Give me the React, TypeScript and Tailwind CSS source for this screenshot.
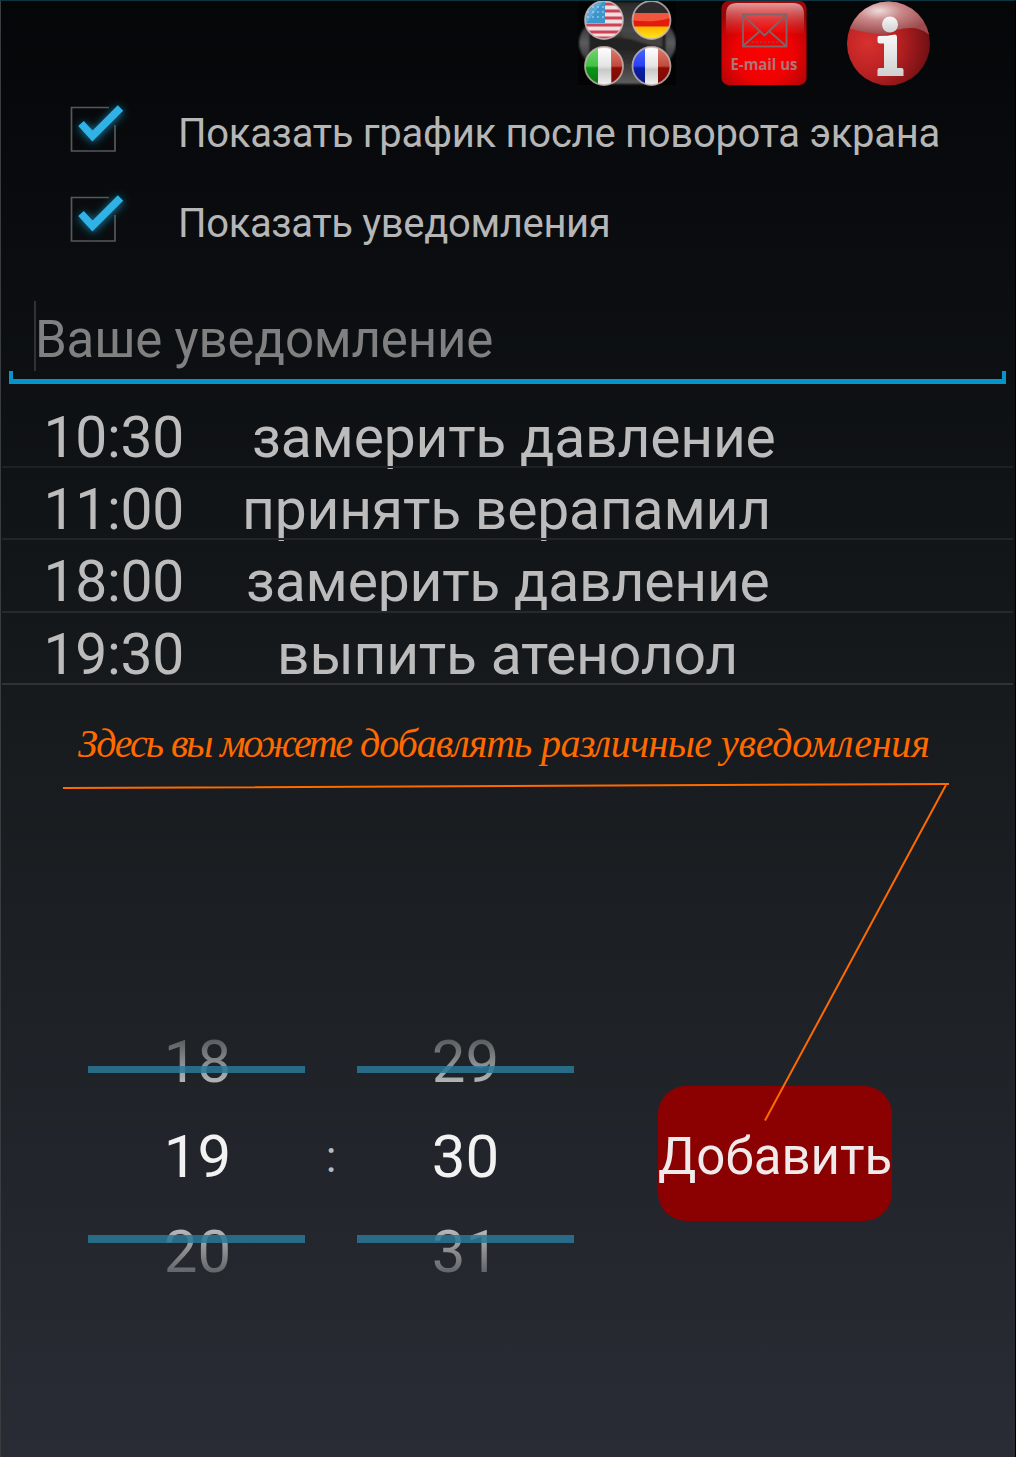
import React from "react";

const notifications = [
  { time: "10:30", text: "замерить давление", pad: "pl-[68px]", line: "bg-[#1e2022]" },
  { time: "11:00", text: "принять верапамил", pad: "pl-[58px]", line: "bg-[#232629]" },
  { time: "18:00", text: "замерить давление", pad: "pl-[62px]", line: "bg-[#272a2d]" },
  { time: "19:30", text: "выпить атенолол", pad: "pl-[93px]", line: "bg-[#303336]" },
];

const hintWords = [
  { text: "Здесь", style: "w-[93px] tracking-[-2.1px]" },
  { text: "вы", style: "w-[49px] tracking-[-2px]" },
  { text: "можете", style: "w-[140px] tracking-[-2.4px]" },
  { text: "добавлять", style: "w-[181px] tracking-[-1px]" },
  { text: "различные", style: "w-[180px] tracking-[-0.6px]" },
  { text: "уведомления", style: "w-[214px] tracking-[-0.2px]" },
];

function LanguagesIcon() {
  const flags = [
    { id: "us", cx: 26, cy: 20 },
    { id: "de", cx: 73.5, cy: 20 },
    { id: "it", cx: 26, cy: 66 },
    { id: "fr", cx: 73.5, cy: 66 },
  ];
  return (
    <svg width="98" height="86" viewBox="0 0 98 86" className="block">
      <defs>
        <linearGradient id="pad" x1="0" y1="0" x2="0" y2="1">
          <stop offset="0" stopColor="#2a2a2a" />
          <stop offset="0.35" stopColor="#484848" />
          <stop offset="0.5" stopColor="#252323" />
          <stop offset="0.7" stopColor="#303030" />
          <stop offset="1" stopColor="#606060" />
        </linearGradient>
        <linearGradient id="side" x1="0" y1="0" x2="0" y2="1">
          <stop offset="0" stopColor="#151515" />
          <stop offset="0.5" stopColor="#5c5c5e" />
          <stop offset="1" stopColor="#151515" />
        </linearGradient>
        <linearGradient id="gold" x1="0" y1="0" x2="0" y2="1">
          <stop offset="0" stopColor="#ffb400" />
          <stop offset="1" stopColor="#ffee20" />
        </linearGradient>
        <linearGradient id="green" x1="0" y1="0" x2="0" y2="1">
          <stop offset="0" stopColor="#6fd86a" />
          <stop offset="0.5" stopColor="#43c243" />
          <stop offset="0.55" stopColor="#0c9418" />
          <stop offset="1" stopColor="#087a10" />
        </linearGradient>
        <linearGradient id="blue" x1="0" y1="0" x2="0" y2="1">
          <stop offset="0" stopColor="#4a68ff" />
          <stop offset="0.5" stopColor="#2a40f0" />
          <stop offset="0.55" stopColor="#0a1ea8" />
          <stop offset="1" stopColor="#0a1680" />
        </linearGradient>
        <linearGradient id="maroon" x1="0" y1="0" x2="0" y2="1">
          <stop offset="0" stopColor="#e08070" />
          <stop offset="0.5" stopColor="#c04a3c" />
          <stop offset="0.55" stopColor="#8c0c04" />
          <stop offset="1" stopColor="#7a0a04" />
        </linearGradient>
        <linearGradient id="pearl" x1="0" y1="0" x2="0" y2="1">
          <stop offset="0" stopColor="#ffffff" />
          <stop offset="0.5" stopColor="#e4e4e4" />
          <stop offset="0.6" stopColor="#c8c8c8" />
          <stop offset="1" stopColor="#f2f2f2" />
        </linearGradient>
        <filter id="soften">
          <feGaussianBlur stdDeviation="1" />
        </filter>
        {flags.map((f) => (
          <clipPath key={f.id} id={f.id}>
            <circle cx={f.cx} cy={f.cy} r="19" />
          </clipPath>
        ))}
      </defs>
      <rect y="1" width="98" height="84" fill="#030304" />
      <g filter="url(#soften)">
        <ellipse cx="49.500" cy="43" rx="48.500" ry="33" fill="url(#side)" />
        <rect x="11" y="6" width="77" height="74" rx="8" fill="#1c1b1b" />
        <path d="M27 2h46v82H27z" fill="url(#pad)" />
        <path d="M12 38h74v13H12z" fill="#242222" />
        <path d="M45 38c15 1 20 7 39 9V32H45z" fill="#444242" />
      </g>
      <g clipPath="url(#us)">
        <rect x="6" y="0" width="40" height="40" fill="#f0dfe0" />
        <path d="M6 4h40M6 11h40M6 18h40M6 25h40M6 32h40M6 38h40" stroke="#cc4355" strokeWidth="3" />
        <rect x="6" y="0" width="21" height="23" fill="#3d95cc" />
        <path d="M9 7h17M9 12h17M9 17h17" stroke="#8cc6e8" strokeWidth="1.600" strokeDasharray="2 3" />
        <path d="M6 0h20L8 24z" fill="#fff" opacity="0.18" />
      </g>
      <g clipPath="url(#de)">
        <rect x="53" y="0" width="42" height="14" fill="#2c2a2a" />
        <rect x="53" y="13" width="42" height="14" fill="#e01c0c" />
        <path d="M53 13h42v4c-15 5-28 5-42 3z" fill="#f2553c" />
        <rect x="53" y="26.500" width="42" height="14" fill="url(#gold)" />
      </g>
      <g clipPath="url(#it)">
        <rect x="6" y="47" width="14" height="38" fill="url(#green)" />
        <rect x="20" y="47" width="13.500" height="38" fill="url(#pearl)" />
        <rect x="33.500" y="47" width="13" height="38" fill="url(#maroon)" />
      </g>
      <g clipPath="url(#fr)">
        <rect x="53" y="47" width="14" height="38" fill="url(#blue)" />
        <rect x="67" y="47" width="13" height="38" fill="url(#pearl)" />
        <rect x="80" y="47" width="13" height="38" fill="url(#maroon)" />
      </g>
      {flags.map((f) => (
        <circle key={f.id} cx={f.cx} cy={f.cy} r="19" fill="none" stroke="#c9b9b6" strokeWidth="1.8" opacity="0.8" />
      ))}
    </svg>
  );
}

function MailIcon() {
  return (
    <svg width="86" height="86" viewBox="0 0 86 86" className="block">
      <defs>
        <radialGradient id="mailRed" cx="0.5" cy="0.62" r="0.66">
          <stop offset="0" stopColor="#fa0202" />
          <stop offset="0.5" stopColor="#f00202" />
          <stop offset="0.8" stopColor="#c40406" />
          <stop offset="1" stopColor="#980608" />
        </radialGradient>
        <linearGradient id="mailGloss" x1="0" y1="0" x2="0" y2="1">
          <stop offset="0" stopColor="#f0b4b4" stopOpacity="0.85" />
          <stop offset="1" stopColor="#e05050" stopOpacity="0.05" />
        </linearGradient>
      </defs>
      <rect x="0.500" y="1" width="85" height="84" rx="7" fill="url(#mailRed)" />
      <path d="M5 34V14Q5 3 16 3H72Q83 3 83 14V34Q44 30 5 34Z" fill="url(#mailGloss)" />
      <g fill="none" stroke="#806468" strokeWidth="1.800">
        <rect x="22" y="14.500" width="43.500" height="32" />
        <path d="M22 15L43.500 35.500L65 15M22 46L39 31M65 46L48 31" />
      </g>
      <path d="M31 42h26" stroke="#b03038" strokeWidth="2" strokeDasharray="2 2" />
      <text x="9.500" y="69.500" textLength="67" lengthAdjust="spacingAndGlyphs" fontFamily="Open Sans, sans-serif" fontWeight="700" fontSize="15.500" fill="#ae7478">
        E-mail us
      </text>
    </svg>
  );
}

function InfoIcon() {
  return (
    <svg width="84" height="86" viewBox="0 0 84 86" className="block">
      <defs>
        <radialGradient id="infoRed" cx="0.25" cy="0.5" r="0.75">
          <stop offset="0" stopColor="#d8302f" />
          <stop offset="0.5" stopColor="#b82022" />
          <stop offset="1" stopColor="#6e1012" />
        </radialGradient>
        <radialGradient id="infoGloss" cx="0.38" cy="0.3" r="0.65">
          <stop offset="0" stopColor="#eedcdc" />
          <stop offset="0.4" stopColor="#ca8a8b" />
          <stop offset="1" stopColor="#9c4a4c" />
        </radialGradient>
        <linearGradient id="infoInk" x1="0" y1="0" x2="0" y2="1">
          <stop offset="0" stopColor="#f8f8f8" />
          <stop offset="1" stopColor="#d0d0d0" />
        </linearGradient>
        <clipPath id="infoClip">
          <ellipse cx="41.500" cy="43.500" rx="41.500" ry="42" />
        </clipPath>
      </defs>
      <g clipPath="url(#infoClip)">
        <rect width="84" height="86" fill="url(#infoRed)" />
        <path d="M0 28Q18 33 38 35Q52 27 66 28Q76 29 84 36V0H0Z" fill="url(#infoGloss)" />
      </g>
      <g fill="url(#infoInk)">
        <circle cx="43" cy="24.500" r="8" />
        <path d="M31.500 36Q41 36 48 34.500Q50 34.500 50 37V68H54.500Q56.500 68 56.500 70V76H30.500V70Q30.500 68 32.500 68H37V43.500H33Q30.500 43.500 30.500 41.500V38Q30.500 36 31.500 36Z" />
      </g>
    </svg>
  );
}

function CheckMark() {
  return (
    <svg width="74" height="66" viewBox="0 0 74 66" className="block">
      <defs>
        <filter id="glow" x="-50%" y="-50%" width="200%" height="200%">
          <feGaussianBlur stdDeviation="4.5" />
        </filter>
      </defs>
      <path d="M49 12.500H11.500V56H55V30" fill="none" stroke="#56585a" strokeWidth="1.700" />
      <path d="M21 30L33 42L61 14" fill="none" stroke="#16708f" strokeWidth="9" filter="url(#glow)" />
      <path d="M21 28.500L32.500 41L60.500 13" fill="none" stroke="#31b2e6" strokeWidth="7.600" />
    </svg>
  );
}

function CheckRow({ label, tracking }: { label: string; tracking: string }) {
  return (
    <label className="flex h-[90px] items-center">
      <span className="ml-[58.5px] w-[118.5px] pb-[10px]">
        <CheckMark />
      </span>
      <span className={"pt-[2px] text-[40px] leading-[90px] whitespace-nowrap text-[#b6b6b6] " + tracking}>{label}</span>
    </label>
  );
}

function Wheel({ values, shift }: { values: string[]; shift: string }) {
  return (
    <div className="relative h-[284px] w-[217px] text-center text-[60px] leading-[95px]">
      <div className={"-mt-[2px] " + shift}>
        <div className="h-[95px] bg-linear-to-b from-[#3c4043] from-10% to-[#c4c5c6] to-80% bg-clip-text text-transparent">{values[0]}</div>
        <div className="h-[95px] text-[#f2f2f2]">{values[1]}</div>
        <div className="h-[95px] bg-linear-to-b from-[#c4c5c6] from-20% to-[#3c4043] to-95% bg-clip-text text-transparent">{values[2]}</div>
      </div>
      <div className="absolute top-[50px] left-0 h-[7px] w-full bg-[#2a7897]/85" />
      <div className="absolute top-[219px] left-0 h-[8px] w-full bg-[#2a7897]/85" />
    </div>
  );
}

export default function App() {
  return (
    <main className="relative h-[1457px] w-[1016px] overflow-hidden border-t border-r border-l border-t-[#0c3542] border-r-black border-l-[#3a3d40] bg-linear-to-b from-[#050608] via-[#171b1e] to-[#292c34] font-[Roboto,sans-serif]">
      <header className="-mt-px flex h-[88px] items-start pl-[577px]">
        <LanguagesIcon />
        <div className="ml-[45px]">
          <MailIcon />
        </div>
        <div className="ml-[40px]">
          <InfoIcon />
        </div>
      </header>

      <CheckRow label="Показать график после поворота экрана" tracking="tracking-[-0.28px]" />
      <CheckRow label="Показать уведомления" tracking="tracking-[-0.35px]" />

      <div className="mt-[33px] ml-[8px] flex h-[83px] w-[997px] flex-col">
        <div className="ml-[25px] h-[70px] border-l-2 border-[#303234] text-[51px] leading-[78px] tracking-[-0.18px] whitespace-nowrap text-[#808080]">
          <span className="-ml-px">Ваше уведомление</span>
        </div>
        <div className="h-[13px] border-x-4 border-b-5 border-[#0595c9]" />
      </div>

      <ul className="mt-[11px]">
        {notifications.map((n) => (
          <li key={n.time} className="relative flex h-[72.200px] pl-[42.500px] text-[57px] leading-[85px] whitespace-nowrap text-[#bcbcbc]">
            <span className="w-[140.500px] tracking-[-0.3px]">{n.time}</span>
            <span className={"tracking-[-0.2px] " + n.pad}>{n.text}</span>
            <span className={"absolute right-[2px] -bottom-px left-[1px] h-[2px] " + n.line} />
          </li>
        ))}
      </ul>

      <p className="mt-[34px] ml-[77px] flex font-['Liberation_Serif',serif] text-[40px] leading-[52px] whitespace-nowrap text-[#ff6a00] italic">
        {hintWords.map((w) => (
          <span key={w.text} className={w.style}>
            {w.text}{" "}
          </span>
        ))}
      </p>

      <section className="mt-[246px] flex pl-[87px]">
        <Wheel values={["18", "19", "20"]} shift="pl-[2px]" />
        <span className="w-[52px] text-center text-[44px] leading-[282px] text-[#b8babb]">:</span>
        <Wheel values={["29", "30", "31"]} shift="pl-0" />
        <button className="mt-[70px] ml-[84px] h-[135px] w-[234px] rounded-[28px] bg-[#8b0000] pt-[8px] text-[51px] whitespace-nowrap text-[#f0eaea]">
          <span>Добавить</span>
        </button>
      </section>

      <svg width="1016" height="1457" viewBox="0 0 1016 1457" className="pointer-events-none absolute -top-px -left-px" fill="none" stroke="#ff6a00" strokeWidth="2">
        <path d="M63 788L949 784M946.500 784L765 1120.500" />
      </svg>
    </main>
  );
}
